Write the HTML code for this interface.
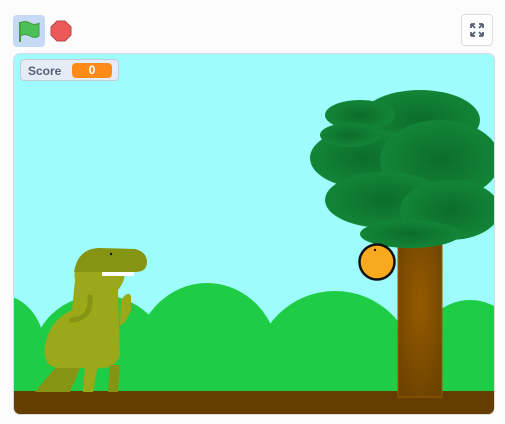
<!DOCTYPE html>
<html><head><style>
html,body{margin:0;width:505px;height:424px;overflow:hidden}
body{background:#fcfcfd;position:relative;font-family:"Liberation Sans",sans-serif}
.flag{position:absolute;left:13px;top:15px;width:32px;height:32px;background:#c5daf5;border-radius:4px}
.fs{position:absolute;left:461px;top:14px;width:32px;height:32px;border:1px solid #d9dde3;border-radius:4px;background:#fff;box-sizing:border-box}
.stage{position:absolute;left:14px;top:54px;width:480px;height:360px;border-radius:6px;overflow:hidden;background:#9ffcfc;box-shadow:0 0 0 1px #d6dbe3}
.mon{position:absolute;left:20px;top:59px;width:99px;height:22px;background:#e6ecf6;border:1px solid #c3cbd8;border-radius:4px;box-sizing:border-box}
.mon span{position:absolute;left:7px;top:4px;font-size:12px;font-weight:bold;color:#575e75}
.mon b{position:absolute;left:51px;top:3px;width:40px;height:15px;background:#fe8b17;border-radius:4px;color:#fff;font-size:12px;text-align:center;line-height:15px}
</style></head><body>
<div class="flag"><svg width="32" height="32"><path d="M7 7 L7 27" stroke="#45993d" stroke-width="2"/><path d="M7 8 Q12 5 17 8 Q22 11 26 8 L26 21 Q22 24 17 21 Q12 18 7 21Z" fill="#4cbf56" stroke="#45993d" stroke-width="1"/></svg></div>
<svg style="position:absolute;left:50px;top:20px" width="22" height="22"><polygon points="7,1 15,1 21,7 21,15 15,21 7,21 1,15 1,7" fill="#ec5959" stroke="#b84848" stroke-width="1"/></svg>
<div class="fs"><svg width="30" height="30"><g stroke="#575e75" stroke-width="1.8" fill="none"><path d="M9 9l4 4M9 9h4M9 9v4"/><path d="M21 9l-4 4M21 9h-4M21 9v4"/><path d="M9 21l4-4M9 21h4M9 21v-4"/><path d="M21 21l-4-4M21 21h-4M21 21v-4"/></g></svg></div>
<div class="stage">
<svg width="480" height="360" viewBox="14 54 480 360">
<g fill="#1fcc45">
<ellipse cx="0" cy="350" rx="45" ry="55"/>
<ellipse cx="100" cy="360" rx="68" ry="65"/>
<ellipse cx="207" cy="360" rx="72" ry="77"/>
<ellipse cx="335" cy="370" rx="80" ry="79"/>
<ellipse cx="470" cy="360" rx="55" ry="60"/>
<rect x="14" y="340" width="480" height="55"/>
</g>
<rect x="14" y="391" width="480" height="23" fill="#663d00"/>
<defs><radialGradient id="tr" cx="0.5" cy="0.4" r="0.7"><stop offset="0" stop-color="#955a00"/><stop offset="1" stop-color="#6b4200"/></radialGradient>
<radialGradient id="lf" cx="0.5" cy="0.5" r="0.6"><stop offset="0" stop-color="#0c6d2a"/><stop offset="1" stop-color="#148a3a"/></radialGradient></defs>
<rect x="398" y="240" width="44" height="157" fill="url(#tr)" stroke="#9a5a00"/>
<g fill="url(#lf)">
<ellipse cx="420" cy="120" rx="60" ry="30"/>
<ellipse cx="365" cy="158" rx="55" ry="30"/>
<ellipse cx="440" cy="160" rx="60" ry="40"/>
<ellipse cx="385" cy="200" rx="60" ry="28"/>
<ellipse cx="450" cy="210" rx="50" ry="30"/>
<ellipse cx="410" cy="234" rx="50" ry="14"/>
<ellipse cx="360" cy="115" rx="35" ry="15"/>
<ellipse cx="350" cy="135" rx="30" ry="12"/>
</g>
<circle cx="377" cy="262" r="17.5" fill="#f9a91d" stroke="#111" stroke-width="2.5"/>
<circle cx="375" cy="250" r="1.2" fill="#111"/>
<g fill="#9aa81a">
<path d="M75 280 Q72 265 85 262 L120 265 Q130 275 118 290 L120 355 Q115 370 95 368 L60 368 Q42 368 45 345 Q50 320 72 310Z"/>
<path d="M121 300 Q128 290 131 296 L131 310 Q125 325 120 325Z"/>
</g>
<path d="M55 368 L35 392 L70 392 L80 368Z" fill="#869413"/>
<path d="M85 365 L83 392 L93 392 L98 365Z" fill="#9aa81a"/>
<path d="M110 365 L108 392 L118 392 L120 365Z" fill="#869413"/>
<path d="M90 297 Q92 318 72 320" stroke="#869413" stroke-width="5" fill="none" stroke-linecap="round"/>
<path d="M74 272 Q78 248 100 248 L135 249 Q147 252 147 262 Q147 272 135 272 L74 272Z" fill="#859412"/>
<rect x="102" y="272" width="32" height="4" fill="#fff"/>
<circle cx="111" cy="254" r="1.2" fill="#111"/>
</svg>
</div>
<div class="mon"><span>Score</span><b>0</b></div>
</body></html>
